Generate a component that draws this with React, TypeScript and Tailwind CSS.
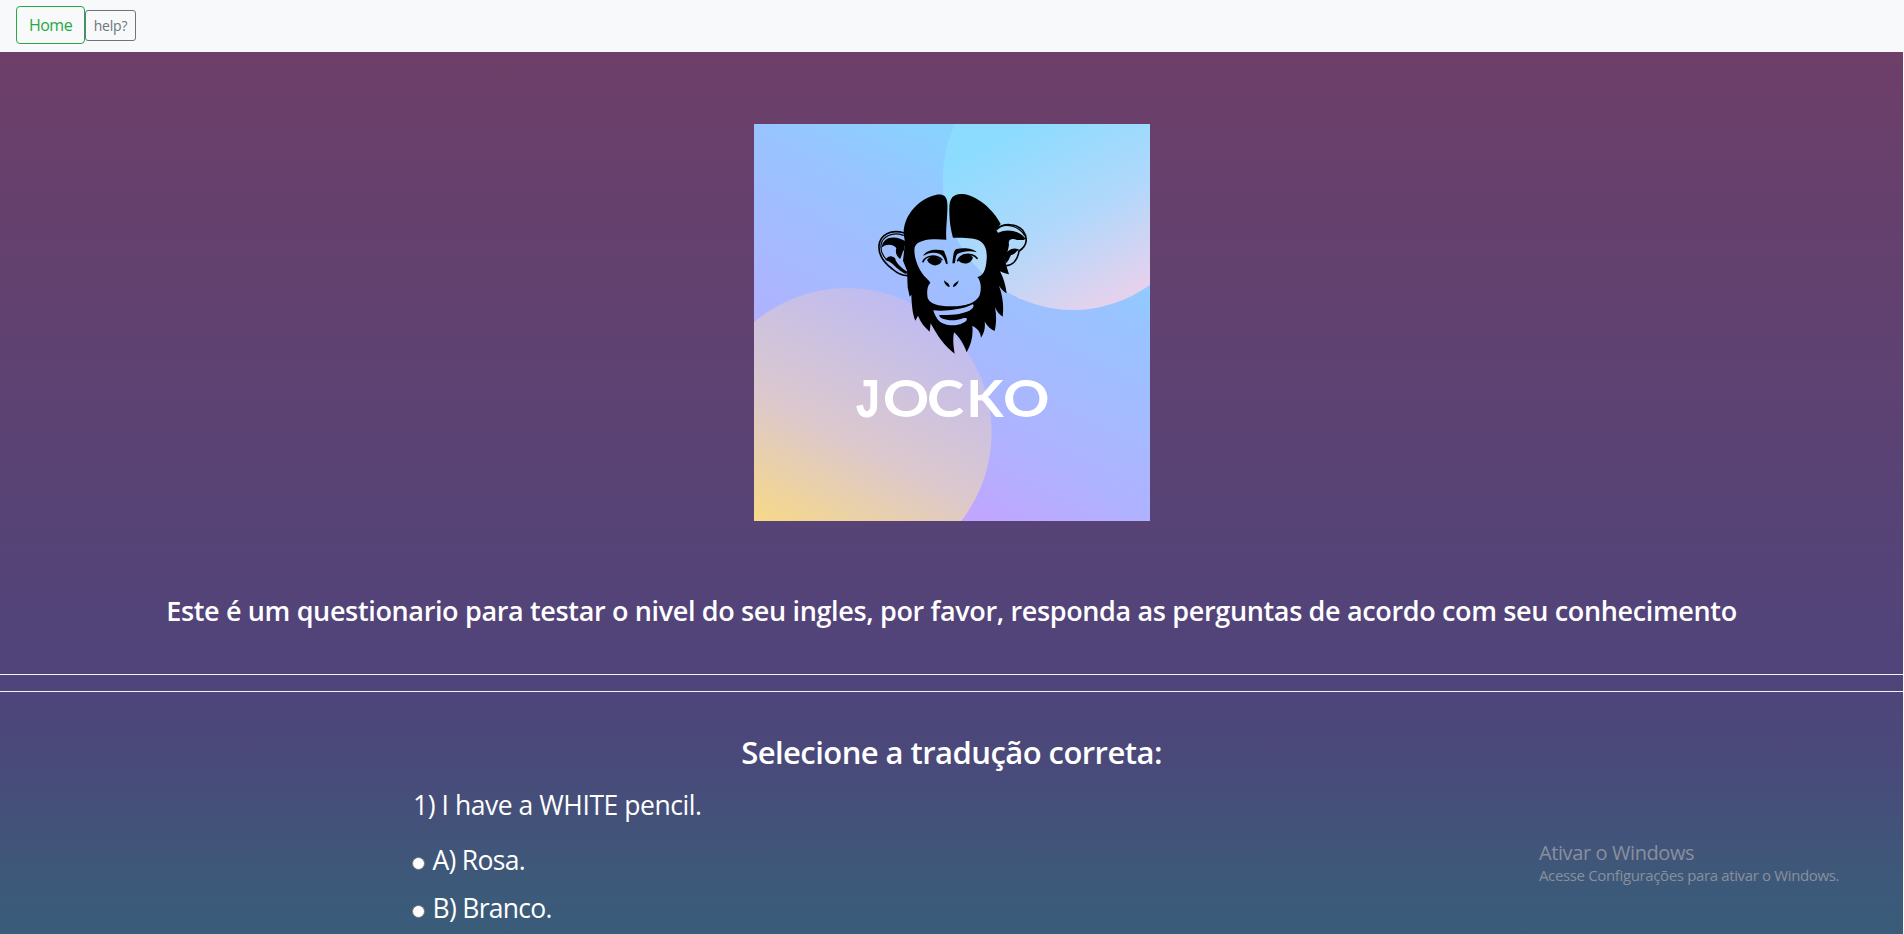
const options = ["A) Rosa.", "B) Branco."];

function JockoLogo() {
  return (
    <svg className="block h-[397px] w-[396px]" viewBox="30 30 1188 1191" preserveAspectRatio="none" role="img" aria-label="Jocko">
      <defs>
        <linearGradient id="sky" gradientUnits="userSpaceOnUse" x1="-345" y1="667" x2="184" y2="-356">
          <stop offset="0" stopColor="#c0a6ff" />
          <stop offset="0.2" stopColor="#b0b2ff" />
          <stop offset="0.64" stopColor="#98c4ff" />
          <stop offset="0.815" stopColor="#8bd0ff" />
          <stop offset="1" stopColor="#80d8ff" />
        </linearGradient>
        <linearGradient id="moon" gradientUnits="userSpaceOnUse" x1="830" y1="40" x2="1110" y2="590">
          <stop offset="0" stopColor="#8cdcff" />
          <stop offset="0.5" stopColor="#b0d8fb" />
          <stop offset="1" stopColor="#ead1ec" />
        </linearGradient>
        <linearGradient id="sun" gradientUnits="userSpaceOnUse" x1="480" y1="540" x2="110" y2="1270">
          <stop offset="0" stopColor="#bdbbf3" />
          <stop offset="0.57" stopColor="#dcc8cd" />
          <stop offset="1" stopColor="#f8d985" />
        </linearGradient>
      </defs>
      <rect x="30" y="30" width="1188" height="1191" fill="url(#sky)" />
      <circle cx="987" cy="197" r="391" fill="url(#moon)" />
      <circle cx="310" cy="955" r="433" fill="url(#sun)" />

      <path
        fillRule="evenodd"
        d="M607 377 C604 340 614 285 609 260 C605 242 590 240 575 243 C530 252 478 300 479 360 L483 385 L477 440 L489 470 L491 520 L497 548 L502 542 C503 575 506 600 514 620 L522 605 C530 625 542 640 557 653 L560 628 C580 665 600 695 632 719 C628 695 626 675 630 655 C645 668 660 690 668 715 C682 690 688 665 685 636 C700 642 710 655 711 671 C722 656 724 640 722 623 C730 636 740 646 752 651 C757 630 758 605 753 580 C758 592 766 602 776 608 C780 575 776 545 765 515 C772 526 779 533 788 538 C785 515 780 495 768 472 C776 476 786 479 795 481 L787 455 L782 432 L776 380 L757 348 L770 330 C750 290 700 243 655 240 C630 239 617 250 616 280 C615 320 621 350 627 371 C650 371 680 371 700 377 C722 385 730 405 728 435 C726 468 718 486 700 489 C710 500 713 520 708 540 C700 568 660 577 625 577 C585 578 558 570 551 552 C548 535 549 516 559 506 C555 498 548 494 540 485 C520 460 508 425 512 400 C520 374 570 374 607 377Z
           M568 589 C600 592 655 588 686 571 C692 574 688 584 676 590 C650 602 620 603 586 603 C584 610 600 618 625 619 C645 619 655 611 667 612 C672 618 665 625 650 630 C630 637 595 636 580 615 C574 605 570 598 568 589Z"
      />

      <g fill="none" stroke="#000" strokeLinecap="round">
        <path strokeWidth="5" d="M481 357 C440 345 408 362 405 395 C403 425 425 450 445 465 C462 480 478 485 491 485" />
        <path strokeWidth="3.5" d="M478 364 C445 352 415 368 411 393 C409 412 416 425 427 436" />
        <path strokeWidth="5" d="M759 346 C775 327 818 327 836 349 C852 370 851 395 825 411 C821 438 806 453 788 455" />
        <path strokeWidth="3.5" d="M768 338 C790 328 828 338 841 364" />
        <path strokeWidth="5" d="M537 443 C545 425 575 420 593 437" />
        <path strokeWidth="5" d="M641 440 C652 417 686 415 699 433" />
      </g>
      <path d="M412 402 C418 364 455 364 485 382 L480 408 C474 415 474 426 468 435 C458 426 453 417 457 403 C450 388 422 389 412 402Z" />
      <path d="M424 438 C434 423 446 425 454 434 C454 444 475 465 490 473 L487 480 C470 475 455 458 446 450 Q438 442 424 438Z" />
      <path d="M759 358 C785 342 825 348 845 374 C838 380 830 378 819 378 C804 372 791 376 795 392 C793 405 790 420 780 432 L768 405Z" />
      <path d="M781 430 C787 408 808 397 825 407 C815 413 814 422 801 423 C796 433 792 444 785 449Z" />

      <path d="M537 426 C546 408 575 404 600 410 C604 423 611 434 611 451 L606 449 C602 434 596 424 586 419 C570 413 552 416 537 426Z" />
      <path d="M625 448 C628 425 628 410 637 405 C663 400 688 404 698 415 C680 409 655 412 641 419 C634 425 635 440 632 448Z" />
      <path d="M549 438 C560 422 580 425 593 442 C586 458 560 460 549 438Z" />
      <path d="M643 439 C654 417 677 416 687 431 C680 451 656 455 643 439Z" />
      <path d="M600 498 C605 506 617 506 617 519 C608 517 600 509 600 498Z" />
      <path d="M644 498 C640 506 627 507 627 519 C637 517 643 509 644 498Z" />

      <g fill="#fff" fontFamily="Lato, 'Open Sans', sans-serif" fontWeight="700" fontSize="157">
        <text transform="translate(330 910) scale(0.84 1)" fontFamily="'Liberation Mono', monospace" fontSize="166">J</text>
        <text transform="translate(416 910) scale(1.1 1)">O</text>
        <text transform="translate(549 910) scale(1.07 1)">C</text>
        <text transform="translate(667 910) scale(1.04 1)">K</text>
        <text transform="translate(777 910) scale(1.1 1)">O</text>
      </g>
    </svg>
  );
}

export default function App() {
  return (
    <div className="flex h-[934px] w-full flex-col overflow-hidden bg-[#f8f9fa] pr-px font-['Open_Sans','Noto_Sans',sans-serif] text-white">
      <nav className="flex h-[52px] shrink-0 items-center bg-[#f8f9fa] px-4 pb-0.5">
        <button className="flex h-[38px] w-[69px] items-center justify-center rounded border border-[#28a745] text-base tracking-[-0.5px] text-[#28a745]">
          Home
        </button>
        <button className="flex h-[31px] w-[51px] items-center justify-center rounded-[3px] border border-[#6c757d] pt-0.5 text-sm tracking-[-0.2px] text-[#6c757d]">
          help?
        </button>
      </nav>

      <main className="relative flex h-[882px] shrink-0 flex-col bg-[linear-gradient(180deg,#6d3f69_0%,#50447a_70%,#4b487a_79%,#3e5879_93%,#395c79_100%)]">
        <div className="flex justify-center pt-[72px]">
          <JockoLogo />
        </div>

        <h3 className="mt-[73px] whitespace-nowrap text-center text-[27px] leading-[34px] font-semibold tracking-[-0.35px]">
          Este é um questionario para testar o nivel do seu ingles, por favor, responda as perguntas de acordo com seu conhecimento
        </h3>

        <div className="mt-[46px] h-[18px] border-y border-[#f3f1f3]" />

        <section className="flex flex-col px-[413px] pt-[41px]">
          <h2 className="whitespace-nowrap text-center text-[31px] leading-[38px] font-semibold tracking-[-0.55px]">
            Selecione a tradução correta:
          </h2>
          <p className="mt-[17px] text-[26.5px] leading-[34px] tracking-[-0.45px]">1) I have a WHITE pencil.</p>
          <div className="mt-[14px] flex flex-col">
            {options.map((option) => (
              <label key={option} className="flex h-12 items-center text-[26.5px] leading-[48px] tracking-[-0.7px]">
                <input
                  type="radio"
                  name="q1"
                  className="-ml-px mt-[6px] mr-[7.5px] size-[13px] appearance-none rounded-full border border-[#767676] bg-white"
                />
                {option}
              </label>
            ))}
          </div>
        </section>

        <aside className="absolute top-[787px] left-[1539px] whitespace-nowrap text-[#8a8f9e]">
          <p className="text-[20px] leading-[28px] tracking-[-0.4px]">Ativar o Windows</p>
          <p className="-mt-[2px] text-[15px] leading-[20px] tracking-[-0.36px]">Acesse Configurações para ativar o Windows.</p>
        </aside>
      </main>
    </div>
  );
}
